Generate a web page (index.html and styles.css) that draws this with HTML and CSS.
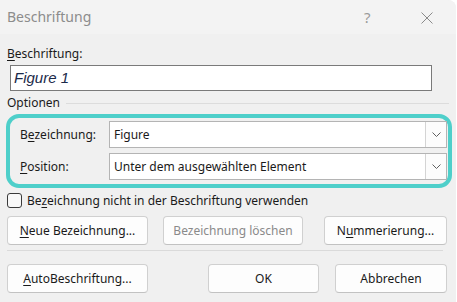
FILE: index.html
```html
<!DOCTYPE html>
<html lang="de">
<head>
    <meta charset="UTF-8">
    <title>Beschriftung</title>
    <link rel="stylesheet" href="styles.css">
</head>
<body>
    <div class="dialog">
        <div class="titlebar">
            <div class="title">Beschriftung</div>
            <div class="help">?</div>
            <div class="close">
                <svg width="12" height="12" viewBox="0 0 12 12"><path d="M0.5 0.5 L11.5 11.5 M11.5 0.5 L0.5 11.5" stroke="#8a8a8a" stroke-width="1" fill="none"/></svg>
            </div>
        </div>

        <div class="content">
            <div class="label"><u>B</u>eschriftung:</div>
            <div class="textbox">Figure 1</div>

            <div class="group-head">
                <span>Optionen</span>
                <div class="group-line"></div>
            </div>

            <div class="highlight">
                <div class="field">
                    <div class="field-label">B<u>e</u>zeichnung:</div>
                    <div class="combo">
                        <div class="combo-value">Figure</div>
                        <div class="combo-btn">
                            <svg width="9" height="5" viewBox="0 0 9 5"><path d="M0.5 0.5 L4.5 4.5 L8.5 0.5" stroke="#606060" stroke-width="1" fill="none"/></svg>
                        </div>
                    </div>
                </div>
                <div class="field">
                    <div class="field-label"><u>P</u>osition:</div>
                    <div class="combo">
                        <div class="combo-value">Unter dem ausgewählten Element</div>
                        <div class="combo-btn">
                            <svg width="9" height="5" viewBox="0 0 9 5"><path d="M0.5 0.5 L4.5 4.5 L8.5 0.5" stroke="#606060" stroke-width="1" fill="none"/></svg>
                        </div>
                    </div>
                </div>
            </div>

            <div class="check-row">
                <div class="checkbox"></div>
                <div>Be<u>z</u>eichnung nicht in der Beschriftung verwenden</div>
            </div>

            <div class="button-row">
                <button class="btn btn-new"><u>N</u>eue Bezeichnung...</button>
                <button class="btn btn-delete" disabled>Bezeichnung löschen</button>
                <button class="btn btn-numbering">N<u>u</u>mmerierung...</button>
            </div>

            <div class="separator"></div>

            <div class="button-row bottom">
                <button class="btn btn-auto"><u>A</u>utoBeschriftung...</button>
                <button class="btn btn-ok">OK</button>
                <button class="btn btn-cancel">Abbrechen</button>
            </div>
        </div>
    </div>
</body>
</html>
```

FILE: styles.css
```css
body, html {
    margin: 0;
    padding: 0;
    width: 457px;
    height: 302px;
    overflow: hidden;
    background: #ffffff;
}
.dialog {
    width: 456px;
    height: 302px;
    background: #f0f0f0;
    border-top-right-radius: 8px;
    font-family: "Noto Sans", sans-serif;
    font-size: 12px;
    color: #1a1a1a;
}
u {
    text-decoration-thickness: 1px;
    text-underline-offset: 2px;
}
.titlebar {
    height: 34px;
    display: flex;
    align-items: center;
    padding-left: 7px;
    background: #f3f3f3;
    border-top-right-radius: 8px;
}
.title {
    flex: 1;
    font-size: 14px;
    color: #8c8c8c;
    margin-top: -1px;
}
.help {
    width: 57px;
    font-size: 15px;
    color: #9a9a9a;
    margin-top: -1px;
}
.close {
    width: 35px;
    display: flex;
    padding-top: 1px;
}
.content {
    padding: 0 7px;
}
.label {
    margin-top: 11px;
    height: 18px;
    line-height: 18px;
}
.textbox {
    margin: 2px 17px 0 3px;
    height: 26px;
    box-sizing: border-box;
    border: 1px solid #7a7a7a;
    background: #fff;
    padding-left: 3px;
    line-height: 23px;
    font-family: "Liberation Sans", sans-serif;
    font-style: italic;
    font-size: 15px;
    color: #1b2a4a;
}
.group-head {
    display: flex;
    align-items: center;
    margin-top: 4px;
    height: 16px;
    line-height: 16px;
}
.group-line {
    flex: 1;
    height: 1px;
    background: #dcdcdc;
    margin: 0 0 0 6px;
}
.highlight {
    margin: 3px 0 0 -1px;
    width: 446px;
    height: 74px;
    box-sizing: border-box;
    border: 4px solid #4ecfca;
    border-radius: 13px;
    padding: 3px 1px 0 10px;
    display: flex;
    flex-direction: column;
    gap: 5px;
}
.field {
    display: flex;
    align-items: center;
}
.field-label {
    width: 89px;
}
.combo {
    flex: 1;
    height: 27px;
    box-sizing: border-box;
    border: 1px solid #b4b4b4;
    background: #fff;
    display: flex;
}
.combo-value {
    flex: 1;
    padding-left: 4px;
    line-height: 25px;
}
.combo-btn {
    width: 20px;
    border-left: 1px solid #d4d4d4;
    background: #fcfcfc;
    display: flex;
    align-items: center;
    justify-content: center;
}
.check-row {
    display: flex;
    align-items: center;
    gap: 5px;
    margin-top: 4px;
    height: 16px;
}
.checkbox {
    width: 13px;
    height: 13px;
    border: 1px solid #3a3a3a;
    border-radius: 3px;
    background: #f8f8f8;
}
.button-row {
    display: flex;
    margin-top: 8px;
}
.btn {
    height: 29px;
    box-sizing: border-box;
    border: 1px solid #d0d0d0;
    border-bottom-color: #c2c2c2;
    border-radius: 4px;
    background: #fdfdfd;
    font-family: "Noto Sans", sans-serif;
    font-size: 12px;
    color: #1a1a1a;
    padding: 0;
}
.btn-new, .btn-auto {
    width: 141px;
}
.btn-delete {
    width: 140px;
    margin-left: 15px;
    color: #8a8a8a;
}
.btn-numbering {
    width: 123px;
    margin-left: 21px;
}
.separator {
    height: 1px;
    background: #dadada;
    margin: 5px 6px 0 0;
}
.button-row.bottom {
    margin-top: 13px;
}
.btn-ok {
    width: 111px;
    margin-left: 60px;
}
.btn-cancel {
    width: 112px;
    margin-left: 16px;
}
```
